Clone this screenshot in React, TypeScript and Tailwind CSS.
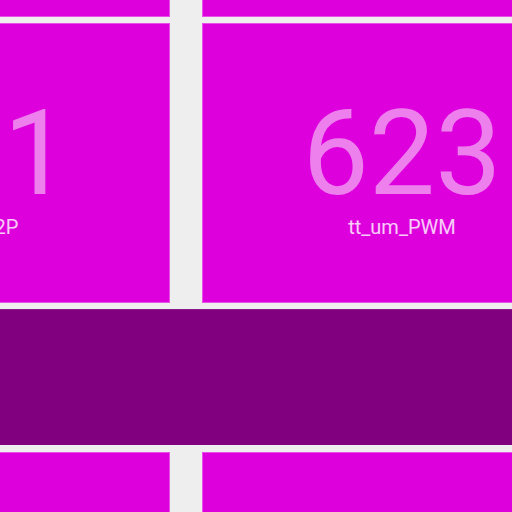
const tiles = [
  { value: '881', label: 'tt_um_C2P' },
  { value: '623', label: 'tt_um_PWM' },
]

function Tile({ value, label }: { value?: string; label?: string }) {
  return (
    <div className="flex h-full w-[400px] shrink-0 flex-col items-center border border-[#e84fe8] bg-[#dd00dd] pt-[71px]">
      {value && (
        <>
          <div className="text-[118px] leading-none text-white/50">{value}</div>
          <div className="mt-[4px] text-[20px] leading-none text-white/80">{label}</div>
        </>
      )}
    </div>
  )
}

export default function App() {
  return (
    <div
      className="h-[512px] w-[512px] overflow-hidden bg-[#eeeeee]"
      style={{ fontFamily: 'Roboto, "Noto Sans", sans-serif' }}
    >
      <div className="mt-[-263px] flex flex-col">
        <div className="ml-[-230px] flex h-[280px] gap-[32px]">
          <Tile />
          <Tile />
        </div>
        <div className="mt-[6px] ml-[-230px] flex h-[280px] gap-[32px]">
          {tiles.map((t) => (
            <Tile key={t.value} value={t.value} label={t.label} />
          ))}
        </div>
        <div className="mt-[6px] h-[136px] border-t border-[#8a1a8a] bg-[#800080]" />
        <div className="mt-[7px] ml-[-230px] flex h-[280px] gap-[32px]">
          <Tile />
          <Tile />
        </div>
      </div>
    </div>
  )
}
